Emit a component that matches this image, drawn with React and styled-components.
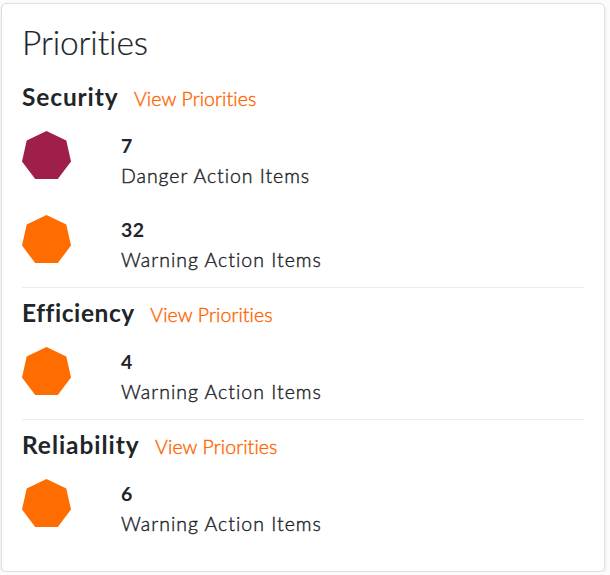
import React from "react";
import styled, { createGlobalStyle } from "styled-components";

const Global = createGlobalStyle`
  * { box-sizing: border-box; }
  body {
    margin: 0;
    background: #fcfcfc;
    color: #212529;
    font-family: Lato, "Open Sans", sans-serif;
    font-size: 20px;
    line-height: 30px;
  }
`;

const Card = styled.main`
  width: 604px;
  height: 569px;
  margin: 3px 0 0 1px;
  padding: 20px;
  background: #fff;
  border: 1px solid #dedede;
  border-radius: 5px;
  box-shadow: 0 2px 4px rgba(0, 0, 0, 0.08);
`;

const Title = styled.h1`
  height: 48px;
  margin: 0;
  font-size: 33.5px;
  font-weight: 300;
  line-height: 37px;
  letter-spacing: -0.1px;
  white-space: nowrap;
  -webkit-text-stroke: 0.2px currentColor;
`;

const Section = styled.section`
  & + & {
    border-top: 1px solid #ececec;
  }
`;

const Header = styled.header`
  display: flex;
  align-items: baseline;
  gap: 15.5px;
  height: 59px;
  padding-top: 10px;
  white-space: nowrap;
`;

const Heading = styled.h2`
  margin: 0;
  font-size: 24.5px;
  font-weight: 700;
  line-height: 30px;
  letter-spacing: ${(p) => p.$tracking}px;
`;

const Link = styled.a`
  color: #ff6600;
  font-size: 19.5px;
  font-weight: 300;
  letter-spacing: 0.1px;
  text-decoration: none;
  -webkit-text-stroke: 0.4px currentColor;
`;

const Item = styled.div`
  display: flex;
  gap: 50px;
  height: 84px;
  &:last-child {
    height: 72px;
  }
`;

const Shape = styled.svg`
  display: block;
  width: 49px;
  height: 49px;
  fill: ${(p) => (p.$level === "Danger" ? "#9e1f49" : "#ff6d00")};
`;

const Count = styled.div`
  font-size: 19.5px;
  font-weight: 700;
  letter-spacing: 0.5px;
`;

const Label = styled.div`
  font-size: 19.5px;
  font-weight: 300;
  letter-spacing: ${(p) => p.$tracking}px;
  white-space: nowrap;
  -webkit-text-stroke: 0.4px currentColor;
`;

const sections = [
  { name: "Security", tracking: 0.87, items: [["Danger", 7], ["Warning", 32]] },
  { name: "Efficiency", tracking: 0.57, items: [["Warning", 4]] },
  { name: "Reliability", tracking: 0.94, items: [["Warning", 6]] },
];

const labelTracking = { Danger: 0.95, Warning: 1 };

export default function App() {
  return (
    <>
      <Global />
      <Card>
        <Title>Priorities</Title>
        {sections.map((s) => (
          <Section key={s.name}>
            <Header>
              <Heading $tracking={s.tracking}>{s.name}</Heading>
              <Link href="#">View Priorities</Link>
            </Header>
            {s.items.map(([level, count]) => (
              <Item key={level}>
                <Shape $level={level} viewBox="0 0 49 49" aria-hidden="true">
                  <path d="M24.5 0 44.3 9.4 49 30.6 35.8 48H13.2L0 30.6 4.7 9.4Z" />
                </Shape>
                <div>
                  <Count>{count}</Count>
                  <Label $tracking={labelTracking[level]}>{level} Action Items</Label>
                </div>
              </Item>
            ))}
          </Section>
        ))}
      </Card>
    </>
  );
}
